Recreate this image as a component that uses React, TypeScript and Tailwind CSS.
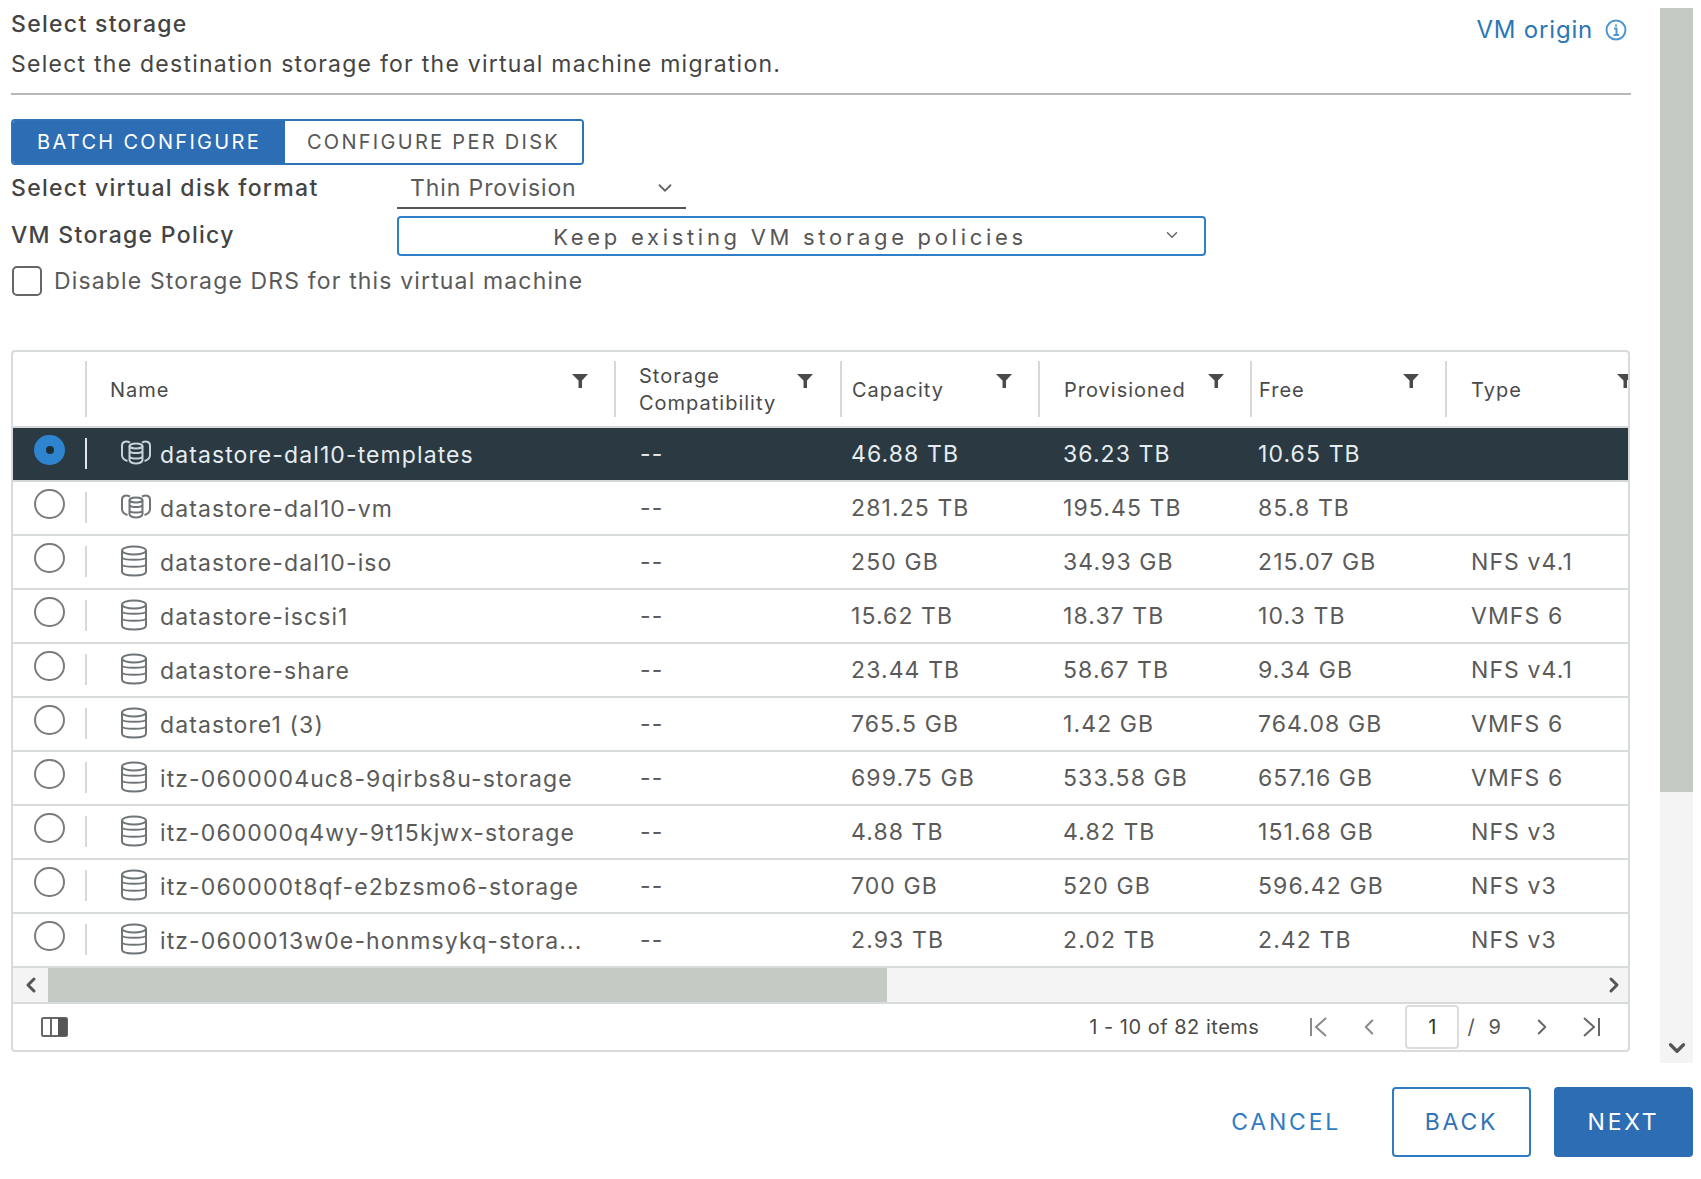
import { ChevronDown, ChevronLeft, ChevronRight } from "lucide-react";

const FONT = "font-['Inter','Noto_Sans',sans-serif]";

interface Row {
  name: string;
  capacity: string;
  provisioned: string;
  free: string;
  type: string;
  cluster?: boolean;
}

const rows: Row[] = [
  { name: "datastore-dal10-templates", capacity: "46.88 TB", provisioned: "36.23 TB", free: "10.65 TB", type: "", cluster: true },
  { name: "datastore-dal10-vm", capacity: "281.25 TB", provisioned: "195.45 TB", free: "85.8 TB", type: "", cluster: true },
  { name: "datastore-dal10-iso", capacity: "250 GB", provisioned: "34.93 GB", free: "215.07 GB", type: "NFS v4.1" },
  { name: "datastore-iscsi1", capacity: "15.62 TB", provisioned: "18.37 TB", free: "10.3 TB", type: "VMFS 6" },
  { name: "datastore-share", capacity: "23.44 TB", provisioned: "58.67 TB", free: "9.34 GB", type: "NFS v4.1" },
  { name: "datastore1 (3)", capacity: "765.5 GB", provisioned: "1.42 GB", free: "764.08 GB", type: "VMFS 6" },
  { name: "itz-0600004uc8-9qirbs8u-storage", capacity: "699.75 GB", provisioned: "533.58 GB", free: "657.16 GB", type: "VMFS 6" },
  { name: "itz-060000q4wy-9t15kjwx-storage", capacity: "4.88 TB", provisioned: "4.82 TB", free: "151.68 GB", type: "NFS v3" },
  { name: "itz-060000t8qf-e2bzsmo6-storage", capacity: "700 GB", provisioned: "520 GB", free: "596.42 GB", type: "NFS v3" },
  { name: "itz-0600013w0e-honmsykq-stora...", capacity: "2.93 TB", provisioned: "2.02 TB", free: "2.42 TB", type: "NFS v3" },
];

const GRID = "grid grid-cols-[72px_529px_226px_198px_212px_195px_186px]";

function FilterIcon() {
  return (
    <svg width="18" height="16" viewBox="0 0 18 16" className="shrink-0 text-[#4a4a4a]">
      <path d="M1 1h16l-6 6.500V15H7.500V7.500z" fill="currentColor" />
    </svg>
  );
}

function HeaderCell({ label, pad, filterRight }: { label: React.ReactNode; pad: string; filterRight: string }) {
  return (
    <div className={`relative my-[9px] flex items-center border-l-2 border-[#d8d8d8] pt-[2px] ${pad}`}>
      <span className="text-[20px] leading-[27px] tracking-[1px] text-[#4a4a4a]">{label}</span>
      <span className={`absolute top-[12px] ${filterRight}`}>
        <FilterIcon />
      </span>
    </div>
  );
}

function StoreIcon({ cluster, selected }: { cluster?: boolean; selected: boolean }) {
  const c = selected ? "#c9d2d6" : "#6f7477";
  if (cluster) {
    return (
      <svg width="32" height="28" viewBox="0 0 32 28" fill="none" stroke={c} strokeWidth="2">
        <path d="M10 3.500C5 1.500 2 3 2 7v9c0 3 2 5 5.500 6M22 3.500C27 1.500 30 3 30 7v9c0 3-2 5-5.500 6" />
        <ellipse cx="16" cy="7" rx="6.500" ry="2.500" />
        <path d="M9.500 7v14c0 2 3 3.500 6.500 3.500s6.500-1.500 6.500-3.500V7M9.500 12.500c2 2 11 2 13 0M9.500 18c2 2 11 2 13 0" />
      </svg>
    );
  }
  return (
    <svg width="28" height="32" viewBox="0 0 28 32" fill="none" stroke={c} strokeWidth="2">
      <ellipse cx="14" cy="5.500" rx="12" ry="4" />
      <path d="M2 5.500v21c0 2.500 5 4 12 4s12-1.500 12-4v-21M2 12.500c1 3 23 3 24 0M2 19.500c1 3 23 3 24 0" />
    </svg>
  );
}

function Radio({ selected }: { selected: boolean }) {
  if (selected) {
    return (
      <span className="flex h-[30px] w-[31px] items-center justify-center rounded-full bg-[#2f84cf]">
        <span className="h-[8px] w-[8px] rounded-full bg-[#1f2d35]" />
      </span>
    );
  }
  return <span className="block h-[30px] w-[31px] rounded-full border-2 border-[#7c7c7c] bg-white" />;
}

function DataRow({ row, selected }: { row: Row; selected: boolean }) {
  return (
    <div
      className={`${GRID} h-[54px] items-center border-b-2 text-[23px] tracking-[1.1px] ${
        selected ? "border-[#d5d8d8] bg-[#2a3942] text-[#e6ecef]" : "border-[#d8dbdb] text-[#5a5a5a]"
      }`}
    >
      <div className="relative flex h-full items-center pl-[21px]">
        <span className="mb-[8px]">
          <Radio selected={selected} />
        </span>
        <span className={`absolute right-[-2px] top-[10px] h-[31px] w-[2px] ${selected ? "bg-[#dfe5e8]" : "bg-[#d8d8d8]"}`} />
      </div>
      <div className="flex min-w-0 items-center pl-[35px]">
        <span className="flex w-[40px] shrink-0 justify-start pb-[3px]">
          <StoreIcon cluster={row.cluster} selected={selected} />
        </span>
        <span className="whitespace-nowrap pt-[2px]">{row.name}</span>
      </div>
      <div className="pl-[26px]">--</div>
      <div className="pl-[11px]">{row.capacity}</div>
      <div className="pl-[25px]">{row.provisioned}</div>
      <div className="pl-[8px]">{row.free}</div>
      <div className="pl-[26px]">{row.type}</div>
    </div>
  );
}

function Pager() {
  return (
    <div className="flex h-[46px] items-center justify-between pl-[28px] pr-[26px]">
      <svg width="27" height="22" viewBox="0 0 27 22" fill="none">
        <rect x="1" y="2" width="25" height="18" rx="1.500" stroke="#666" strokeWidth="2" />
        <path d="M10 2v18" stroke="#666" strokeWidth="2" />
        <rect x="17" y="2" width="9" height="18" fill="#555" />
      </svg>
      <div className="flex items-center text-[#565656]">
        <span className="mr-[49px] text-[20px] tracking-[0.5px] text-[#4a4a4a]">1 - 10 of 82 items</span>
        <svg width="22" height="22" viewBox="0 0 22 22" fill="none" stroke="#8a8a8a" strokeWidth="2">
          <path d="M3 2v18M18 2L8 11l10 9" />
        </svg>
        <ChevronLeft size={26} strokeWidth={1.800} className="ml-[26px] text-[#8a8a8a]" />
        <span className="ml-[23px] flex h-[44px] w-[54px] items-center justify-center rounded-[4px] border-2 border-[#dcdcdc] text-[20px] text-[#333]">
          1
        </span>
        <span className="ml-[8px] text-[20px]">/</span>
        <span className="ml-[14px] text-[20px]">9</span>
        <ChevronRight size={26} strokeWidth={1.800} className="ml-[28px] text-[#666]" />
        <svg width="22" height="22" viewBox="0 0 22 22" fill="none" stroke="#666" strokeWidth="2" className="ml-[25px]">
          <path d="M4 2l10 9L4 20M19 2v18" />
        </svg>
      </div>
    </div>
  );
}

function StorageTable() {
  return (
    <div className="mt-[54px] w-[1619px] overflow-hidden rounded-[4px] border-2 border-[#d8dbdb]">
      <div className={`${GRID} h-[76px] border-b-2 border-[#d5d8d8]`}>
        <div />
        <HeaderCell label="Name" pad="pl-[23px]" filterRight="right-[25px]" />
        <HeaderCell
          label={
            <>
              Storage
              <br />
              Compatibility
            </>
          }
          pad="pl-[23px]"
          filterRight="right-[26px]"
        />
        <HeaderCell label="Capacity" pad="pl-[10px]" filterRight="right-[25px]" />
        <HeaderCell label="Provisioned" pad="pl-[24px]" filterRight="right-[25px]" />
        <HeaderCell label="Free" pad="pl-[7px]" filterRight="right-[25px]" />
        <HeaderCell label="Type" pad="pl-[24px]" filterRight="right-[-3px]" />
      </div>
      {rows.map((r, i) => (
        <DataRow key={r.name} row={r} selected={i === 0} />
      ))}
      <div className="flex h-[36px] items-center border-b-2 border-[#d8dbdb] bg-[#f4f4f4]">
        <ChevronLeft size={24} strokeWidth={3} className="ml-[1px] w-[34px] shrink-0 text-[#555]" />
        <div className="h-full w-[839px] bg-[#c5cac4]" />
        <ChevronRight size={24} strokeWidth={3} className="ml-auto mr-[2px] text-[#555]" />
      </div>
      <Pager />
    </div>
  );
}

export default function App() {
  return (
    <div className={`${FONT} h-[1179px] w-[1701px] overflow-hidden bg-white`}>
      <div className="flex h-[1063px]">
        <div className="w-[1660px] pl-[11px]">
          <div className="flex h-[95px] w-[1620px] justify-between border-b-2 border-[#b8b8b8]">
            <div>
              <h1 className="mt-[10px] text-[23px] font-medium leading-[28px] tracking-[1.3px] text-[#444]">Select storage</h1>
              <p className="mt-[12px] text-[23px] leading-[28px] tracking-[1.25px] text-[#444]">
                Select the destination storage for the virtual machine migration.
              </p>
            </div>
            <div className="mt-[15px] flex h-[30px] items-center gap-[12px] pr-[4px] text-[24px] tracking-[0.8px] text-[#2a77b4]">
              VM origin
              <svg width="22" height="22" viewBox="0 0 22 22" fill="none" stroke="#4d97cf" strokeWidth="2">
                <circle cx="11" cy="11" r="9.500" />
                <path d="M9 9.500h2.500V16M8.500 16h5.500M11 5.500v2" />
              </svg>
            </div>
          </div>

          <div className="mt-[24px] flex h-[46px] w-[573px] overflow-hidden rounded-[4px] border-2 border-[#2f72b5] text-[20px] tracking-[2.3px]">
            <button className="w-[272px] bg-[#2d6db3] text-center text-white">BATCH CONFIGURE</button>
            <button className="flex-1 bg-white text-center text-[#565656]">CONFIGURE PER DISK</button>
          </div>

          <div className="flex h-[44px] items-center">
            <span className="w-[386px] pt-[2px] text-[23px] font-medium tracking-[1.3px] text-[#444]">Select virtual disk format</span>
            <div className="flex h-[44px] w-[289px] items-center justify-between border-b-2 border-[#555] pl-[13px] pr-[10px] pt-[4px] text-[23px] tracking-[0.9px] text-[#5a5a5a]">
              Thin Provision
              <ChevronDown size={22} strokeWidth={2} className="text-[#666]" />
            </div>
          </div>

          <div className="mt-[7px] flex h-[40px] items-center">
            <span className="w-[386px] pb-[2px] text-[23px] font-medium tracking-[1.3px] text-[#444]">VM Storage Policy</span>
            <div className="relative flex h-[40px] w-[809px] items-center justify-center rounded-[4px] border-2 border-[#2f7fc9] pr-[23px] pt-[3px] text-[22px] tracking-[3.7px] text-[#565656]">
              Keep existing VM storage policies
              <ChevronDown size={18} strokeWidth={2} className="absolute right-[23px] top-[8px] text-[#666]" />
            </div>
          </div>

          <label className="mt-[10px] flex h-[30px] items-center gap-[12px] text-[23px] tracking-[1.15px] text-[#5a5a5a]">
            <span className="ml-[1px] h-[30px] w-[30px] rounded-[5px] border-2 border-[#666]" />
            Disable Storage DRS for this virtual machine
          </label>

          <StorageTable />
        </div>

        <div className="mt-[8px] flex w-[33px] flex-col bg-[#f4f4f4]">
          <div className="h-[784px] bg-[#c5cac4]" />
          <ChevronDown size={26} strokeWidth={3} className="mx-auto mb-[2px] mt-auto text-[#555]" />
        </div>
      </div>

      <div className="mt-[24px] flex items-stretch justify-end pr-[8px] text-[23px] tracking-[0.12em]">
        <button className="mr-[51px] text-[#2f7cc4]">CANCEL</button>
        <button className="mr-[23px] h-[70px] w-[139px] rounded-[4px] border-2 border-[#2f7cc4] text-[#2f72b5]">BACK</button>
        <button className="h-[70px] w-[139px] rounded-[4px] bg-[#2d6db3] text-white">NEXT</button>
      </div>
    </div>
  );
}
